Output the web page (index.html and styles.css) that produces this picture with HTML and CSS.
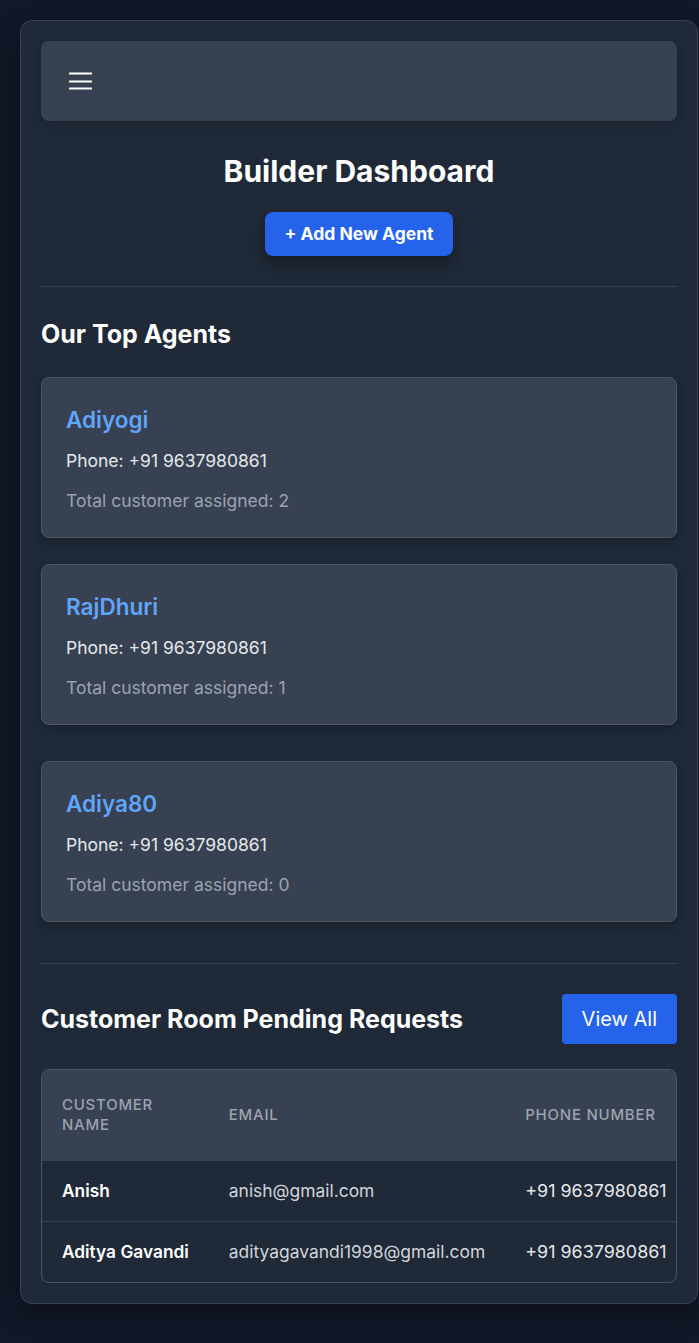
FILE: index.html
```html
<!DOCTYPE html>
<html lang="en">
<head>
<meta charset="utf-8">
<title>Builder Dashboard</title>
<link rel="stylesheet" href="styles.css">
</head>
<body>
<div class="shell">
  <nav class="navbar">
    <button class="menu-btn" aria-label="Menu">
      <svg width="23" height="18" viewBox="0 0 23 18" fill="#ffffff"><rect x="0" y="0.5" width="23" height="2" rx="0.5"/><rect x="0" y="8.5" width="23" height="2" rx="0.5"/><rect x="0" y="15.5" width="23" height="2" rx="0.5"/></svg>
    </button>
  </nav>

  <header class="page-head">
    <h1 class="page-title">Builder Dashboard</h1>
    <button class="btn-add">+ Add New Agent</button>
  </header>

  <section class="agents">
    <h2 class="section-title">Our Top Agents</h2>
    <div class="agent-list">
      <div class="agent-card gap-sm">
        <h3 class="agent-name">Adiyogi</h3>
        <p class="agent-phone">Phone: +91 9637980861</p>
        <p class="agent-total">Total customer assigned: 2</p>
      </div>
      <div class="agent-card gap-lg">
        <h3 class="agent-name">RajDhuri</h3>
        <p class="agent-phone">Phone: +91 9637980861</p>
        <p class="agent-total">Total customer assigned: 1</p>
      </div>
      <div class="agent-card">
        <h3 class="agent-name">Adiya80</h3>
        <p class="agent-phone">Phone: +91 9637980861</p>
        <p class="agent-total">Total customer assigned: 0</p>
      </div>
    </div>
  </section>

  <section class="requests">
    <div class="requests-head">
      <h2 class="section-title">Customer Room Pending Requests</h2>
      <button class="btn-view">View All</button>
    </div>
    <div class="table-wrap">
      <table class="req-table">
        <thead>
          <tr>
            <th>Customer Name</th>
            <th>Email</th>
            <th>Phone Number</th>
          </tr>
        </thead>
        <tbody>
          <tr>
            <td class="cust">Anish</td>
            <td class="mail">anish@gmail.com</td>
            <td class="phone">+91 9637980861</td>
          </tr>
          <tr>
            <td class="cust">Aditya Gavandi</td>
            <td class="mail">adityagavandi1998@gmail.com</td>
            <td class="phone">+91 9637980861</td>
          </tr>
        </tbody>
      </table>
    </div>
  </section>
</div>
</body>
</html>
```

FILE: styles.css
```css
* { box-sizing: border-box; }

html, body {
  margin: 0;
  padding: 0;
}

body {
  background: #111827;
  font-family: Inter, "Noto Sans", "Liberation Sans", sans-serif;
  color: #ffffff;
  min-height: 1343px;
  padding: 20px 0 40px 20px;
}

.shell {
  width: 678px;
  background: #1f2937;
  border: 1px solid #374151;
  border-radius: 12px;
  padding: 20px;
  box-shadow: 0 10px 25px rgba(0, 0, 0, 0.35);
}

.navbar {
  height: 80px;
  background: #374151;
  border-radius: 8px;
  display: flex;
  align-items: center;
  padding: 0 28px;
  box-shadow: 0 4px 8px rgba(0, 0, 0, 0.15);
}

.menu-btn {
  background: none;
  border: 0;
  padding: 0;
  display: flex;
  cursor: pointer;
}

.page-head {
  display: flex;
  flex-direction: column;
  align-items: center;
  padding-top: 32px;
  padding-bottom: 30px;
  border-bottom: 1px solid #374151;
}

.page-title {
  margin: 0 0 23px;
  font-size: 30px;
  line-height: 36px;
  font-weight: 700;
  color: #ffffff;
}

.btn-add {
  background: #2563eb;
  color: #ffffff;
  border: 0;
  border-radius: 8px;
  font-family: inherit;
  font-size: 17.5px;
  line-height: 24px;
  font-weight: 700;
  padding: 10px 20px;
  box-shadow: 0 8px 14px rgba(0, 0, 0, 0.3);
}

.agents {
  padding-top: 31px;
  padding-bottom: 41px;
  border-bottom: 1px solid #374151;
}

.section-title {
  margin: 0;
  font-size: 25px;
  line-height: 32px;
  font-weight: 700;
  color: #ffffff;
}

.agents .section-title {
  margin-bottom: 27px;
}

.agent-list {
  display: flex;
  flex-direction: column;
}

.agent-card {
  background: #374151;
  border: 1px solid #4b5563;
  border-radius: 8px;
  padding: 24px;
  box-shadow: 0 4px 10px rgba(0, 0, 0, 0.2);
}

.agent-card.gap-sm { margin-bottom: 26px; }
.agent-card.gap-lg { margin-bottom: 36px; }

.agent-name {
  margin: 0 0 13px;
  padding-top: 2px;
  font-size: 22.5px;
  line-height: 32px;
  font-weight: 600;
  color: #60a5fa;
}

.agent-phone {
  margin: 0 0 16px;
  font-size: 17.5px;
  line-height: 24px;
  color: #e5e7eb;
}

.agent-total {
  margin: 0;
  font-size: 17.5px;
  line-height: 24px;
  color: #9ca3af;
}

.requests {
  padding-top: 30px;
}

.requests-head {
  display: flex;
  align-items: center;
  justify-content: space-between;
  margin-bottom: 25px;
}

.btn-view {
  background: #2563eb;
  color: #ffffff;
  border: 0;
  border-radius: 4px;
  font-family: inherit;
  font-size: 20px;
  line-height: 28px;
  font-weight: 400;
  padding: 11px 20px;
}

.table-wrap {
  border: 1px solid #4b5563;
  border-radius: 8px;
  overflow: hidden;
  background: #1f2937;
}

.req-table {
  width: 100%;
  border-collapse: collapse;
}

.req-table th {
  background: #374151;
  color: #9ca3af;
  text-transform: uppercase;
  letter-spacing: 0.05em;
  font-size: 15px;
  line-height: 20px;
  font-weight: 500;
  text-align: left;
  padding: 25px 20px 26px;
}

.req-table td {
  white-space: nowrap;
  padding: 18px 20px;
  font-size: 17.3px;
  line-height: 24px;
}

.req-table tbody tr + tr td {
  border-top: 1px solid #374151;
}

.req-table td.cust {
  font-weight: 600;
  color: #ffffff;
}

.req-table td.mail {
  font-size: 17.45px;
  color: #d1d5db;
}

.req-table td.phone {
  font-size: 17.9px;
  color: #e5e7eb;
}
```
